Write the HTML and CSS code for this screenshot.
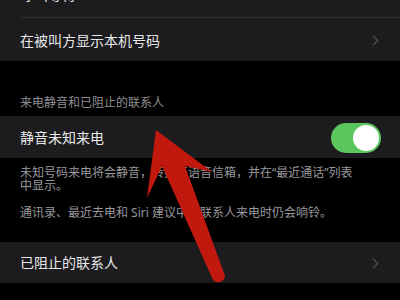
FILE: index.html
```html
<!DOCTYPE html>
<html lang="zh-CN">
<head>
<meta charset="utf-8">
<title>电话设置</title>
<link rel="stylesheet" href="styles.css">
</head>
<body>
<div class="screen">
  <section class="group group-top">
    <div class="row"><span class="label">呼叫等待</span><span class="chevron"></span></div>
    <div class="sep"></div>
    <div class="row row-main"><span class="label">在被叫方显示本机号码</span><span class="chevron"></span></div>
  </section>

  <div class="section-header">来电静音和已阻止的联系人</div>

  <section class="group">
    <div class="row row-toggle">
      <span class="label">静音未知来电</span>
      <span class="switch on"><span class="knob"></span></span>
    </div>
  </section>

  <div class="footer">
    <p>未知号码来电将会静音，转接至语音信箱，并在“最近通话”列表中显示。</p>
    <p>通讯录、最近去电和 Siri 建议中的联系人来电时仍会响铃。</p>
  </div>

  <section class="group">
    <div class="row row-blocked"><span class="label">已阻止的联系人</span><span class="chevron"></span></div>
  </section>

  <svg class="annotation" width="400" height="300" viewBox="0 0 400 300" aria-hidden="true">
    <path d="M156 130 L212 172 L185 166 L225 276 A7 7 0 0 1 213 280 L162 166 L147 198 Z" fill="#c2190f"/>
  </svg>
</div>
</body>
</html>
```
FILE: styles.css
```css
* { box-sizing: border-box; }
html, body {
  margin: 0;
  padding: 0;
  background: #000;
}
body {
  width: 400px;
  height: 300px;
  overflow: hidden;
  font-family: "Noto Sans", "Noto Sans CJK SC", sans-serif;
}
.screen {
  position: relative;
  width: 400px;
  height: 300px;
  overflow: hidden;
  background: #000;
}
.group {
  background: #1c1c1e;
}
.group-top {
  margin-top: -27px;
}
.row {
  display: flex;
  align-items: center;
  justify-content: space-between;
  height: 44px;
  padding: 0 21px 0 20px;
  color: #e8e8ea;
  font-size: 14px;
  line-height: 18px;
}
.row-main {
  height: 43px;
  padding-top: 2px;
}
.sep {
  height: 1px;
  margin-left: 20px;
  background: #2e2e30;
}
.chevron {
  width: 7px;
  height: 7px;
  border-top: 1.5px solid #5c5c60;
  border-right: 1.5px solid #5c5c60;
  transform: rotate(45deg);
  margin-right: 2px;
}
.section-header {
  padding: 34px 20px 5px;
  font-size: 12px;
  line-height: 16px;
  color: #8e8e93;
}
.row-toggle {
  height: 42px;
  padding-right: 19px;
  padding-top: 2px;
}
.switch {
  display: flex;
  align-items: center;
  width: 50px;
  height: 30px;
  padding: 2px;
  border-radius: 15px;
  background: #3a3a3c;
}
.switch.on {
  justify-content: flex-end;
  background: #5cc65e;
}
.knob {
  width: 26px;
  height: 26px;
  border-radius: 50%;
  background: #fff;
}
.footer {
  padding: 8px 40px 0 20px;
  margin-bottom: 23px;
  font-size: 12px;
  line-height: 13px;
  color: #98989d;
}
.footer p {
  margin: 0;
}
.footer p + p {
  margin-top: 14px;
}
.row-blocked {
  height: 41px;
  padding-top: 1px;
}
.annotation {
  position: absolute;
  top: 0;
  left: 0;
  pointer-events: none;
}
```
